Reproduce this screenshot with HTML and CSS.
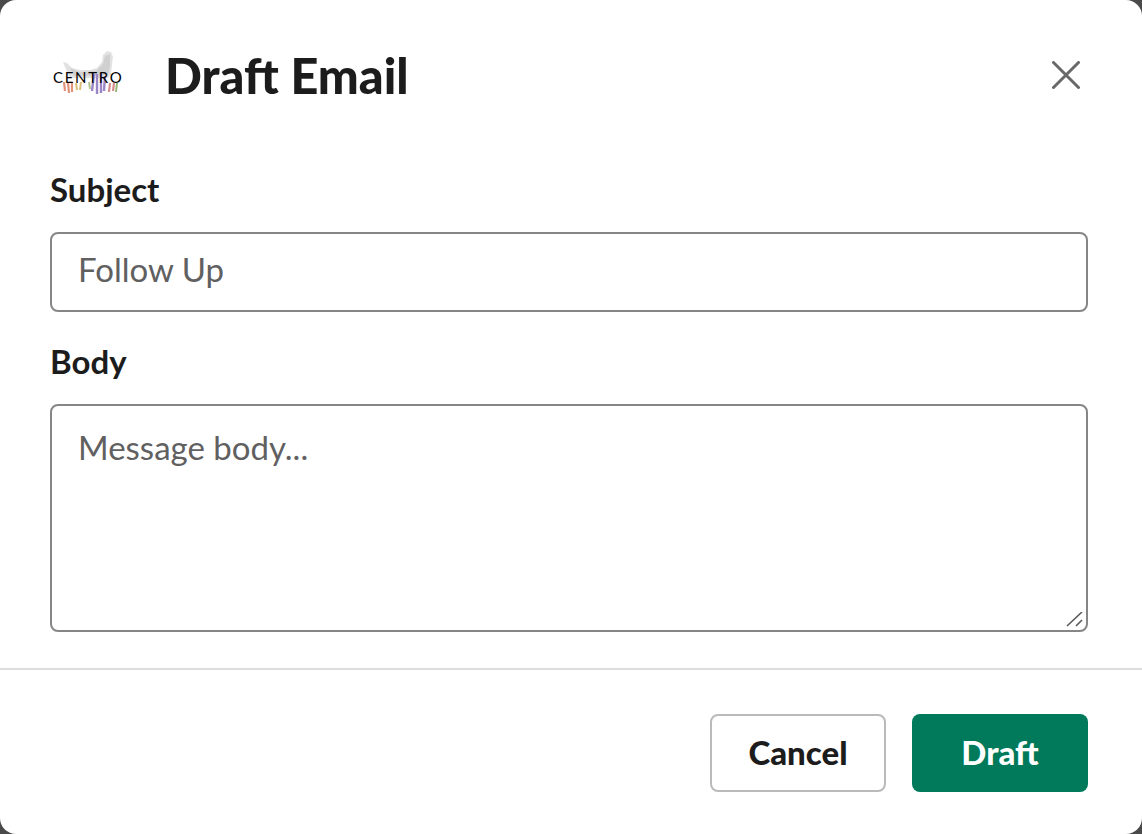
FILE: index.html
```html
<!DOCTYPE html>
<html lang="en">
<head>
    <meta charset="UTF-8">
    <meta name="viewport" content="width=device-width, initial-scale=1.0">
    <title>Draft Email</title>
    <link rel="stylesheet" href="styles.css">
</head>
<body>
    <div class="modal">
        <div class="modal-header">
            <div class="logo">
                <svg class="logo-art" width="74" height="50" viewBox="0 0 74 50">
                    <defs>
                        <filter id="soft" x="-10%" y="-10%" width="120%" height="120%"><feGaussianBlur stdDeviation="0.6"/></filter>
                    </defs>
                    <g filter="url(#soft)">
                        <path d="M13 12 L17 13 L22 18 L30 20 L40 20 L47 18 L52 12 L53 5 L57 1 L61 2 L63 7 L62 14 L61 24 L58 28 L20 28 L17 22 Z" fill="#e2e2e2"/>
                        <path d="M20 18 L30 22 L46 21 L53 14 L55 6 L60 4 L60 16 L58 25 L24 26 Z" fill="#d0d0d0"/>
                        <path d="M14 32 l1 9 M18 33 l1 10 M22 32 l0 10" stroke="#e2917a" stroke-width="2.2"/>
                        <path d="M26 33 l1 7 M31 32 l-1 8" stroke="#dcbf78" stroke-width="2"/>
                        <path d="M39 32 l1 7" stroke="#b5c78e" stroke-width="2"/>
                        <path d="M44 24 l-2 17 M47 24 l0 20 M51 23 l0 20 M55 26 l-1 15" stroke="#9a85c6" stroke-width="2.4"/>
                        <path d="M60 33 l-1 9 M64 33 l-1 8" stroke="#d58c8c" stroke-width="2.2"/>
                        <path d="M67 33 l-1 9" stroke="#94bb74" stroke-width="2"/>
                    </g>
                </svg>
                <span class="logo-text">CENTRO</span>
            </div>
            <h1>Draft Email</h1>
            <button class="close-btn" aria-label="Close">
                <svg width="28" height="28" viewBox="0 0 28 28">
                    <path d="M1.5 1.5 L26.5 26.5 M26.5 1.5 L1.5 26.5" stroke="#696869" stroke-width="3" stroke-linecap="round" fill="none"/>
                </svg>
            </button>
        </div>

        <form class="modal-body">
            <label for="subject">Subject</label>
            <input type="text" id="subject" placeholder="Follow Up">
            <label for="body">Body</label>
            <div class="textarea-wrap">
                <textarea id="body" placeholder="Message body..."></textarea>
                <svg class="grip" width="18" height="16" viewBox="0 0 18 16">
                    <path d="M1 14 L16 0 M10 14 L16 8" stroke="#5a5a5a" stroke-width="1.6" fill="none"/>
                </svg>
            </div>
        </form>

        <div class="modal-footer">
            <button class="btn cancel-btn">Cancel</button>
            <button class="btn draft-btn">Draft</button>
        </div>
    </div>
</body>
</html>
```

FILE: styles.css
```css
* {
    margin: 0;
    padding: 0;
    box-sizing: border-box;
}

body {
    width: 1142px;
    height: 834px;
    overflow: hidden;
    background-color: #4a4a4a;
    font-family: Lato, "Open Sans", sans-serif;
    color: #1d1c1d;
}

.modal {
    height: 834px;
    background-color: #fff;
    border-radius: 16px;
}

.modal-header {
    display: flex;
    align-items: flex-start;
    height: 169px;
    padding: 48px 62px 0 50px;
}

.logo {
    position: relative;
    width: 74px;
    height: 50px;
    margin-top: 2px;
    margin-right: 41px;
}

.logo-art {
    display: block;
}

.logo-text {
    position: absolute;
    left: 3px;
    top: 18px;
    font-size: 15px;
    line-height: 18px;
    font-weight: 400;
    letter-spacing: 1.7px;
    color: #000;
}

h1 {
    flex: 1;
    font-size: 48.6px;
    line-height: 54px;
    font-weight: 900;
}

.close-btn {
    display: flex;
    margin-top: 13px;
    border: none;
    background: none;
    cursor: pointer;
}

.modal-body {
    padding: 0 54px 0 50px;
}

label {
    display: block;
    font-size: 33px;
    line-height: 40px;
    font-weight: 700;
    margin-bottom: 23px;
}

input, textarea {
    display: block;
    width: 100%;
    border: 2px solid #868686;
    border-radius: 8px;
    background-color: #fff;
    font-family: inherit;
    font-size: 33px;
    color: #1d1c1d;
    padding: 0 26px;
    outline: none;
}

input::placeholder, textarea::placeholder {
    color: #616061;
    opacity: 1;
}

input {
    height: 80px;
    padding-bottom: 6px;
    margin-bottom: 29px;
}

.textarea-wrap {
    position: relative;
}

textarea {
    height: 228px;
    padding-top: 19px;
    line-height: 44px;
    resize: none;
}

.grip {
    position: absolute;
    right: 4px;
    bottom: 4px;
}

.modal-footer {
    display: flex;
    justify-content: flex-end;
    gap: 26px;
    margin-top: 36px;
    padding: 44px 54px 0 0;
    border-top: 2px solid #dddddd;
}

.btn {
    width: 176px;
    height: 78px;
    padding-bottom: 3px;
    border-radius: 8px;
    font-family: inherit;
    font-size: 33px;
    font-weight: 900;
    cursor: pointer;
}

.cancel-btn {
    background-color: #fff;
    color: #1d1c1d;
    border: 2px solid #bbbabb;
}

.draft-btn {
    background-color: #007a5a;
    color: #fff;
    border: none;
}
```
